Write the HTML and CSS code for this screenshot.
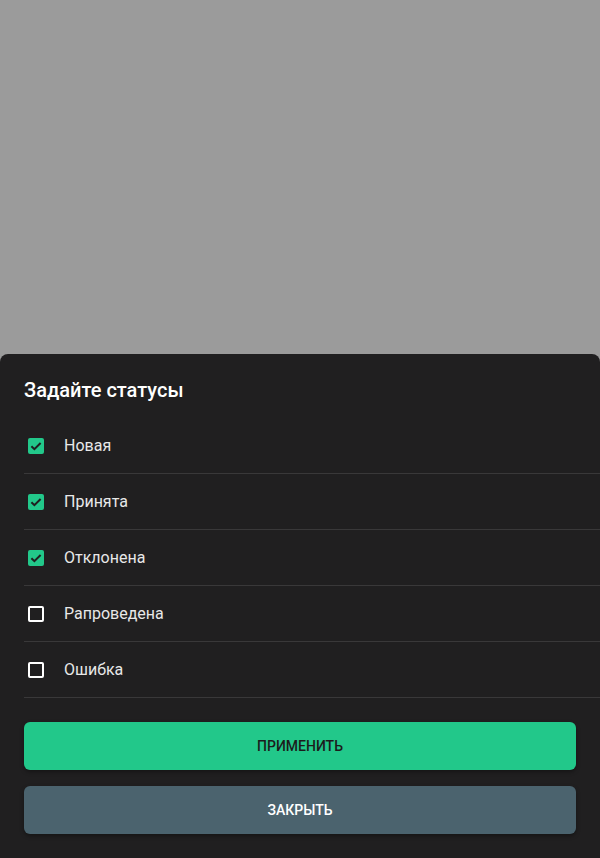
FILE: index.html
```html
<!DOCTYPE html>
<html lang="ru">
<head>
<meta charset="utf-8">
<link rel="stylesheet" href="styles.css">
</head>
<body>
<div class="backdrop"></div>
<div class="sheet">
  <h2 class="title">Задайте статусы</h2>
  <ul class="list">
    <li class="row">
      <span class="box checked"><svg viewBox="0 0 16 16" width="16" height="16"><path d="M3.4 8.2 L6.4 11.2 L12.6 5" fill="none" stroke="#1f1f1f" stroke-width="2"/></svg></span>
      <span class="label">Новая</span>
    </li>
    <li class="row">
      <span class="box checked"><svg viewBox="0 0 16 16" width="16" height="16"><path d="M3.4 8.2 L6.4 11.2 L12.6 5" fill="none" stroke="#1f1f1f" stroke-width="2"/></svg></span>
      <span class="label">Принята</span>
    </li>
    <li class="row">
      <span class="box checked"><svg viewBox="0 0 16 16" width="16" height="16"><path d="M3.4 8.2 L6.4 11.2 L12.6 5" fill="none" stroke="#1f1f1f" stroke-width="2"/></svg></span>
      <span class="label">Отклонена</span>
    </li>
    <li class="row">
      <span class="box"></span>
      <span class="label">Рапроведена</span>
    </li>
    <li class="row">
      <span class="box"></span>
      <span class="label">Ошибка</span>
    </li>
  </ul>
  <div class="actions">
    <button class="btn btn-apply">Применить</button>
    <button class="btn btn-close">Закрыть</button>
  </div>
</div>
</body>
</html>
```

FILE: styles.css
```css
* { box-sizing: border-box; }
html, body {
  margin: 0;
  padding: 0;
  height: 858px;
  overflow: hidden;
}
body {
  background: #9b9b9b;
  font-family: Roboto, "Noto Sans", sans-serif;
  display: flex;
  flex-direction: column;
}
.backdrop {
  flex: 1;
}
.sheet {
  background: #201f20;
  border-radius: 8px 8px 0 0;
  padding: 24px 0 24px 24px;
}
.title {
  margin: 0;
  font-size: 20px;
  line-height: 24px;
  font-weight: 500;
  color: #ffffff;
}
.list {
  list-style: none;
  margin: 16px 0 0;
  padding: 0;
}
.row {
  height: 56px;
  display: flex;
  align-items: center;
  border-bottom: 1px solid #393839;
}
.box {
  width: 16px;
  height: 16px;
  margin-left: 4px;
  border: 2px solid #ffffff;
  border-radius: 2px;
  display: flex;
}
.box.checked {
  border: none;
  background: #22c88a;
}
.label {
  margin-left: 20px;
  font-size: 16px;
  color: #e8e8e8;
}
.actions {
  display: flex;
  flex-direction: column;
  gap: 16px;
  margin-top: 24px;
  padding-right: 24px;
}
.btn {
  height: 48px;
  border: none;
  border-radius: 6px;
  font-family: Roboto, "Noto Sans", sans-serif;
  font-size: 14px;
  font-weight: 500;
  text-transform: uppercase;
  box-shadow: 0 2px 4px rgba(0,0,0,0.35);
}
.btn-apply {
  background: #22c88a;
  color: #1c1c1c;
}
.btn-close {
  background: #4b636e;
  color: #ffffff;
}
```
